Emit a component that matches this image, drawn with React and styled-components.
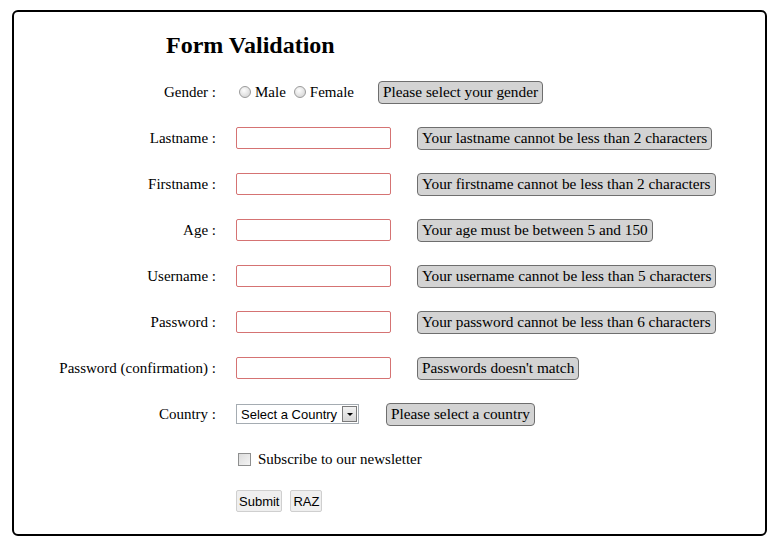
import React from 'react';
import styled, { createGlobalStyle } from 'styled-components';

const Global = createGlobalStyle`
  body {
    margin: 10px 9px 9px 12px;
    background: #fff;
    font-family: "Liberation Serif", "Times New Roman", serif;
    font-size: 15px;
    color: #000;
  }
`;

const Box = styled.div`
  width: 751px;
  height: 522px;
  border: 2px solid #000;
  border-radius: 6px;
  box-sizing: content-box;
`;

const Title = styled.h2`
  margin: 0 0 10px 152px;
  padding-top: 19px;
  font-size: 24px;
  line-height: 28px;
  font-weight: bold;
`;

const Form = styled.form`
  display: grid;
  grid-template-columns: 202px 1fr;
  column-gap: 20px;
`;

const Label = styled.label`
  height: ${p => p.$h || 46}px;
  display: flex;
  align-items: center;
  justify-content: flex-end;
  white-space: nowrap;
`;

const Field = styled.div`
  height: ${p => p.$h || 46}px;
  display: flex;
  align-items: center;
  white-space: nowrap;
`;

const TextInput = styled.input`
  width: 155px;
  height: 22px;
  box-sizing: border-box;
  border: 1px solid #d57373;
  border-radius: 2px;
  padding: 0 3px;
  font: 14px "Liberation Sans", Arial, sans-serif;
  outline: none;
`;

const Radio = styled.input.attrs({ type: 'radio' })`
  appearance: none;
  width: 12px;
  height: 12px;
  margin: 0 4px 0 ${p => p.$first ? 3 : 8}px;
  border: 1px solid #9a9a9a;
  border-radius: 50%;
  background: radial-gradient(circle at 40% 35%, #fdfdfd 0%, #e3e3e3 55%, #cfcfcf 100%);
`;

const Check = styled.input.attrs({ type: 'checkbox' })`
  appearance: none;
  width: 13px;
  height: 13px;
  margin: 0 7px 0 2px;
  border: 1px solid #8e8f8f;
  box-sizing: border-box;
  background: linear-gradient(135deg, #dcdcdc, #f4f4f4);
`;

const Error = styled.span`
  margin-left: ${p => p.$ml || 26}px;
  height: 23px;
  box-sizing: border-box;
  display: inline-flex;
  align-items: center;
  padding: 0 4px;
  background: #d3d3d3;
  border: 1px solid #6e6e6e;
  border-radius: 4px;
  font-size: 15.3px;
`;

const SelectBox = styled.div`
  width: 123px;
  height: 20px;
  box-sizing: border-box;
  border: 1px solid #a5acb2;
  display: flex;
  align-items: center;
  background: #fff;
`;

const Select = styled.select`
  appearance: none;
  flex: 1;
  min-width: 0;
  border: none;
  padding: 0 0 0 4px;
  background: transparent;
  font: 13px "Liberation Sans", Arial, sans-serif;
  color: #000;
  outline: none;
`;

const Arrow = styled.span`
  width: 15px;
  height: 16px;
  margin-right: 1px;
  box-sizing: border-box;
  border: 1px solid #7a7a7a;
  background: linear-gradient(#f2f2f2, #d6d6d6);
  display: flex;
  align-items: center;
  justify-content: center;
  &::after {
    content: "";
    border-left: 3px solid transparent;
    border-right: 3px solid transparent;
    border-top: 3px solid #000;
  }
`;

const Btn = styled.button`
  height: 22px;
  margin-right: 8px;
  padding: 0 2px;
  border: 1px solid #cfcfcf;
  border-radius: 2px;
  background: #efefef;
  font: 13px "Liberation Sans", Arial, sans-serif;
  color: #000;
`;

const rows = [
  ['Lastname :', 'Your lastname cannot be less than 2 characters'],
  ['Firstname :', 'Your firstname cannot be less than 2 characters'],
  ['Age :', 'Your age must be between 5 and 150'],
  ['Username :', 'Your username cannot be less than 5 characters'],
  ['Password :', 'Your password cannot be less than 6 characters'],
  ['Password (confirmation) :', "Passwords doesn't match"],
];

export default function App() {
  return (
    <>
      <Global />
      <Box>
        <Title>Form Validation</Title>
        <Form onSubmit={e => e.preventDefault()}>
          <Label>Gender :</Label>
          <Field>
            <Radio name="g" $first />Male
            <Radio name="g" />Female
            <Error $ml={24}>Please select your gender</Error>
          </Field>

          {rows.map(([l, err]) => (
            <React.Fragment key={l}>
              <Label>{l}</Label>
              <Field>
                <TextInput type={l.startsWith('Password') ? 'password' : 'text'} />
                <Error>{err}</Error>
              </Field>
            </React.Fragment>
          ))}

          <Label>Country :</Label>
          <Field>
            <SelectBox>
              <Select defaultValue="">
                <option value="">Select a Country</option>
              </Select>
              <Arrow />
            </SelectBox>
            <Error $ml={27}>Please select a country</Error>
          </Field>

          <Label $h={44} />
          <Field $h={44}>
            <Check />Subscribe to our newsletter
          </Field>

          <Label $h={40} />
          <Field $h={40}>
            <Btn type="submit">Submit</Btn>
            <Btn type="reset">RAZ</Btn>
          </Field>
        </Form>
      </Box>
    </>
  );
}
